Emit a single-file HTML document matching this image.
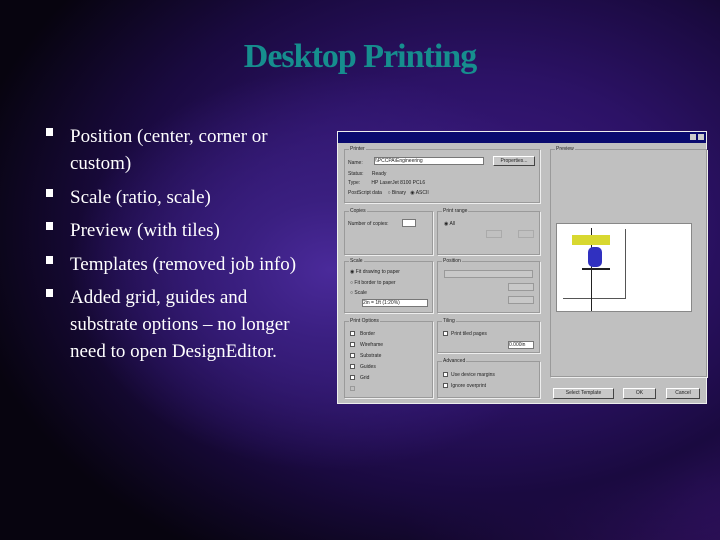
<!DOCTYPE html>
<html><head><meta charset="utf-8"><style>
*{margin:0;padding:0;box-sizing:border-box}
body{width:720px;height:540px;overflow:hidden;position:relative;font-family:"Liberation Serif",serif;
background:
radial-gradient(ellipse 260px 200px at 330px 270px,#4a2a9a 0%,#3a1f80 35%,rgba(40,15,90,0) 100%),
radial-gradient(ellipse 520px 380px at 480px 230px,#3d1b82 0%,#2c1266 40%,#1a0a40 70%,rgba(10,4,25,0) 100%),
radial-gradient(ellipse 300px 260px at 700px 480px,#3a1470 0%,rgba(30,10,60,0) 100%),
#07040f;}
.t{position:absolute;left:0;width:720px;top:38px;text-align:center;color:#168e8e;font-size:34px;font-weight:bold;letter-spacing:-1px}
.b{position:absolute;left:70px;color:#fff;font-size:19px;line-height:27px;white-space:nowrap}
.sq{position:absolute;left:46px;width:7px;height:8px;background:#fff}
.d{position:absolute;left:337px;top:131px;width:370px;height:273px;background:#c0c0c0;border:1px solid #eee;font-family:"Liberation Sans",sans-serif;font-size:5px;color:#222}
.tb{position:absolute;left:0;top:0;width:368px;height:11px;background:#0a0a6e}
.g{position:absolute;border:1px solid #9a9a9a;box-shadow:1px 1px 0 #eee}
.g span{position:absolute;top:-4px;left:4px;background:#c0c0c0;padding:0 1px}
.btn{position:absolute;background:#c8c8c8;border:1px solid #fff;border-right-color:#444;border-bottom-color:#444;text-align:center;line-height:9px}
.w{position:absolute;background:#fff;border:1px solid #777}
.cb{position:absolute;width:5px;height:5px;background:#fff;border:1px solid #555}
.l{position:absolute}
</style></head><body>
<div class="t">Desktop Printing</div>
<div class="sq" style="top:128px"></div>
<div class="sq" style="top:189px"></div>
<div class="sq" style="top:222px"></div>
<div class="sq" style="top:256px"></div>
<div class="sq" style="top:289px"></div>
<div class="b" style="top:123px">Position (center, corner or<br>custom)</div>
<div class="b" style="top:184px">Scale (ratio, scale)</div>
<div class="b" style="top:217px">Preview (with tiles)</div>
<div class="b" style="top:251px">Templates (removed job info)</div>
<div class="b" style="top:284px">Added grid, guides and<br>substrate options – no longer<br>need to open DesignEditor.</div>

<div class="d">
<div class="tb"><div style="position:absolute;right:10px;top:2px;width:6px;height:6px;background:#ccc"></div><div style="position:absolute;right:2px;top:2px;width:6px;height:6px;background:#ccc"></div></div>
<div class="g" style="left:6px;top:17px;width:196px;height:54px"><span>Printer</span></div>
<div class="l" style="left:10px;top:28px">Name:</div>
<div class="w" style="left:36px;top:25px;width:110px;height:8px;font-size:5px;line-height:6px">\\PCCPA\Engineering</div>
<div class="btn" style="left:155px;top:24px;width:42px;height:10px">Properties...</div>
<div class="l" style="left:10px;top:39px">Status:&nbsp;&nbsp;&nbsp;&nbsp;&nbsp;&nbsp;Ready</div>
<div class="l" style="left:10px;top:48px">Type:&nbsp;&nbsp;&nbsp;&nbsp;&nbsp;&nbsp;&nbsp;&nbsp;HP LaserJet 8100 PCL6</div>
<div class="l" style="left:10px;top:58px">PostScript data&nbsp;&nbsp;&nbsp;&nbsp;○ Binary&nbsp;&nbsp;&nbsp;◉ ASCII</div>
<div class="g" style="left:6px;top:79px;width:89px;height:44px"><span>Copies</span></div>
<div class="l" style="left:10px;top:89px">Number of copies:</div>
<div class="w" style="left:64px;top:87px;width:14px;height:8px"></div>
<div class="g" style="left:99px;top:79px;width:103px;height:44px"><span>Print range</span></div>
<div class="l" style="left:106px;top:89px">◉ All</div>
<div class="w" style="left:148px;top:98px;width:16px;height:8px;border-color:#aaa;background:#c0c0c0"></div>
<div class="w" style="left:180px;top:98px;width:16px;height:8px;border-color:#aaa;background:#c0c0c0"></div>
<div class="g" style="left:6px;top:129px;width:89px;height:52px"><span>Scale</span></div>
<div class="l" style="left:12px;top:137px">◉ Fit drawing to paper</div>
<div class="l" style="left:12px;top:148px">○ Fit border to paper</div>
<div class="l" style="left:12px;top:158px">○ Scale</div>
<div class="w" style="left:24px;top:167px;width:66px;height:8px">2in = 1ft (1:20%)</div>
<div class="g" style="left:99px;top:129px;width:103px;height:52px"><span>Position</span></div>
<div class="w" style="left:106px;top:138px;width:89px;height:8px;background:#c8c8c8;border-color:#999"></div>
<div class="w" style="left:170px;top:151px;width:26px;height:8px;background:#c8c8c8;border-color:#999"></div>
<div class="w" style="left:170px;top:164px;width:26px;height:8px;background:#c8c8c8;border-color:#999"></div>
<div class="g" style="left:6px;top:189px;width:89px;height:77px"><span>Print Options</span></div>
<div class="cb" style="left:12px;top:199px"></div><div class="l" style="left:22px;top:199px">Border</div>
<div class="cb" style="left:12px;top:210px"></div><div class="l" style="left:22px;top:210px">Wireframe</div>
<div class="cb" style="left:12px;top:221px"></div><div class="l" style="left:22px;top:221px">Substrate</div>
<div class="cb" style="left:12px;top:232px"></div><div class="l" style="left:22px;top:232px">Guides</div>
<div class="cb" style="left:12px;top:243px"></div><div class="l" style="left:22px;top:243px">Grid</div>
<div class="cb" style="left:12px;top:254px;border-color:#999;background:#c0c0c0"></div>
<div class="g" style="left:99px;top:189px;width:103px;height:32px"><span>Tiling</span></div>
<div class="cb" style="left:105px;top:199px"></div><div class="l" style="left:113px;top:199px">Print tiled pages</div>
<div class="w" style="left:170px;top:209px;width:26px;height:8px">0.000in</div>
<div class="g" style="left:99px;top:229px;width:103px;height:37px"><span>Advanced</span></div>
<div class="cb" style="left:105px;top:240px"></div><div class="l" style="left:113px;top:240px">Use device margins</div>
<div class="cb" style="left:105px;top:251px"></div><div class="l" style="left:113px;top:251px">Ignore overprint</div>
<div class="g" style="left:212px;top:17px;width:157px;height:228px"><span>Preview</span></div>
<div style="position:absolute;left:218px;top:91px;width:136px;height:89px;background:#fff;border:1px solid #888"></div>
<div style="position:absolute;left:224px;top:96px;width:63px;height:70px;background:#fff;box-shadow:1px 1px 0 #555"></div>
<div style="position:absolute;left:253px;top:96px;width:1px;height:83px;background:#222"></div>
<div style="position:absolute;left:234px;top:103px;width:38px;height:10px;background:#d8d830"></div>
<div style="position:absolute;left:250px;top:115px;width:14px;height:20px;background:#3030c0;border-radius:5px"></div>
<div style="position:absolute;left:244px;top:136px;width:28px;height:2px;background:#222"></div>
<div class="btn" style="left:215px;top:256px;width:61px;height:11px">Select Template</div>
<div class="btn" style="left:285px;top:256px;width:33px;height:11px">OK</div>
<div class="btn" style="left:328px;top:256px;width:34px;height:11px">Cancel</div>
</div>
</body></html>
